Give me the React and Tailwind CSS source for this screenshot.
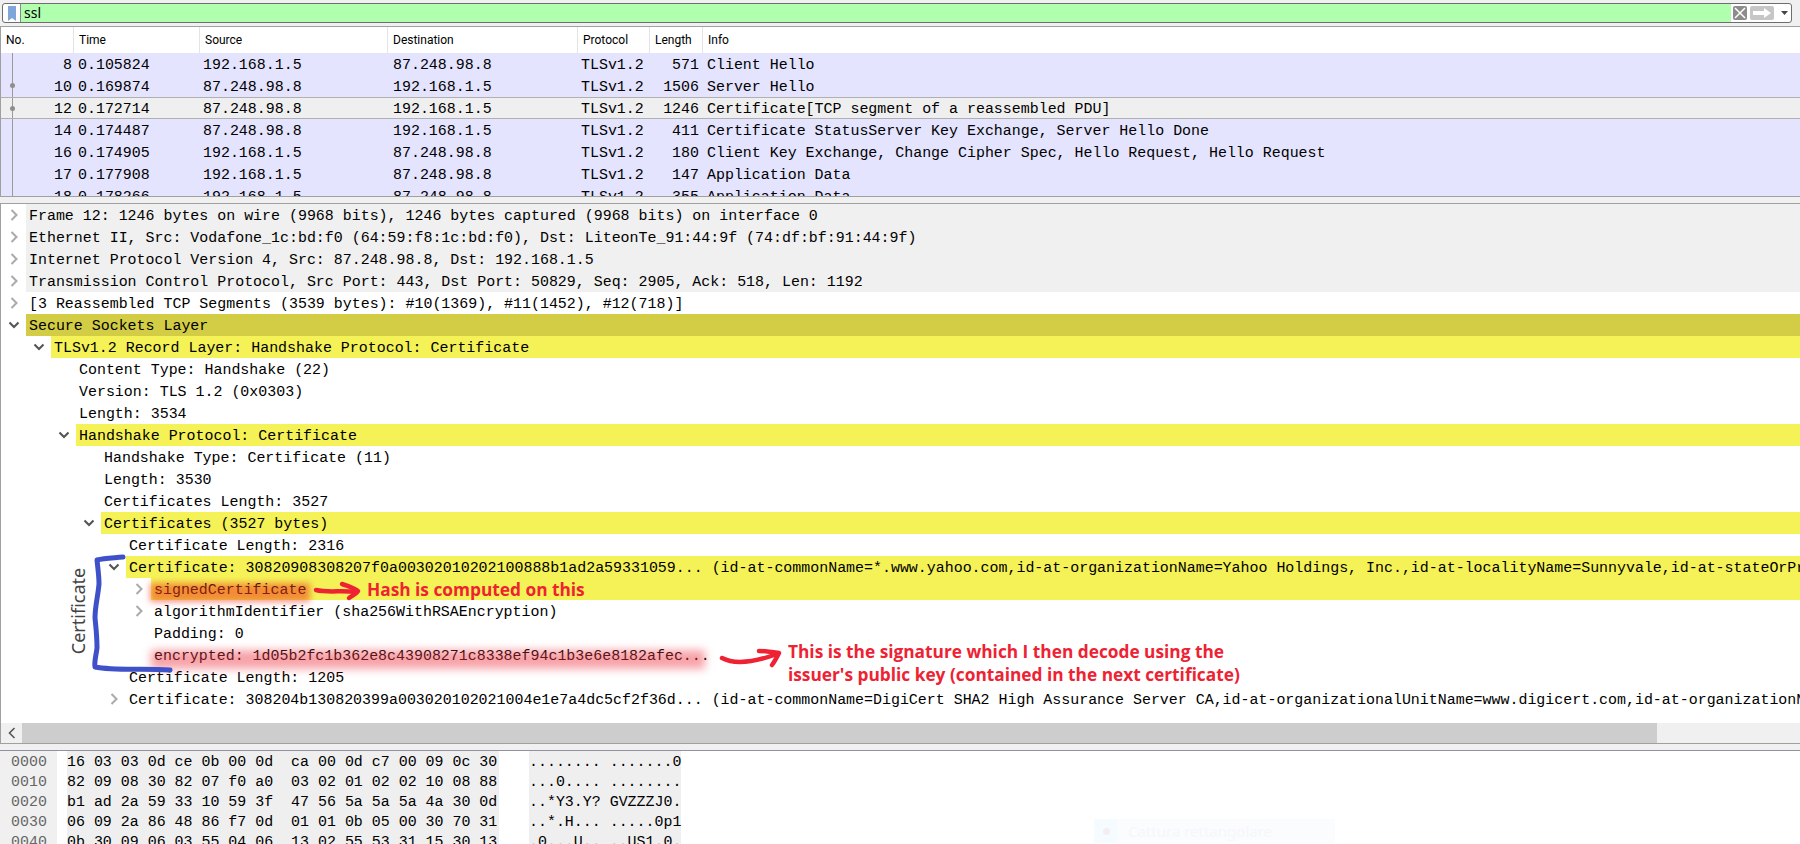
import React from "react";

const packets = [
  ["8", "0.105824", "192.168.1.5", "87.248.98.8", "TLSv1.2", "571", "Client Hello"],
  ["10", "0.169874", "87.248.98.8", "192.168.1.5", "TLSv1.2", "1506", "Server Hello"],
  ["12", "0.172714", "87.248.98.8", "192.168.1.5", "TLSv1.2", "1246", "Certificate[TCP segment of a reassembled PDU]"],
  ["14", "0.174487", "87.248.98.8", "192.168.1.5", "TLSv1.2", "411", "Certificate StatusServer Key Exchange, Server Hello Done"],
  ["16", "0.174905", "192.168.1.5", "87.248.98.8", "TLSv1.2", "180", "Client Key Exchange, Change Cipher Spec, Hello Request, Hello Request"],
  ["17", "0.177908", "192.168.1.5", "87.248.98.8", "TLSv1.2", "147", "Application Data"],
  ["18", "0.178266", "192.168.1.5", "87.248.98.8", "TLSv1.2", "355", "Application Data"],
];

const GREY = "bg-[#f0f0f0]";
const OLIVE = "bg-[#d2cd45]";
const YELLOW = "bg-[#f5f257]";

const details = [
  { x: 30, icon: "right", bg: GREY, text: "Frame 12: 1246 bytes on wire (9968 bits), 1246 bytes captured (9968 bits) on interface 0" },
  { x: 30, icon: "right", bg: GREY, text: "Ethernet II, Src: Vodafone_1c:bd:f0 (64:59:f8:1c:bd:f0), Dst: LiteonTe_91:44:9f (74:df:bf:91:44:9f)" },
  { x: 30, icon: "right", bg: GREY, text: "Internet Protocol Version 4, Src: 87.248.98.8, Dst: 192.168.1.5" },
  { x: 30, icon: "right", bg: GREY, text: "Transmission Control Protocol, Src Port: 443, Dst Port: 50829, Seq: 2905, Ack: 518, Len: 1192" },
  { x: 30, icon: "right", text: "[3 Reassembled TCP Segments (3539 bytes): #10(1369), #11(1452), #12(718)]" },
  { x: 30, icon: "down", bg: OLIVE, text: "Secure Sockets Layer" },
  { x: 55, icon: "down", bg: YELLOW, text: "TLSv1.2 Record Layer: Handshake Protocol: Certificate" },
  { x: 80, text: "Content Type: Handshake (22)" },
  { x: 80, text: "Version: TLS 1.2 (0x0303)" },
  { x: 80, text: "Length: 3534" },
  { x: 80, icon: "down", bg: YELLOW, text: "Handshake Protocol: Certificate" },
  { x: 105, text: "Handshake Type: Certificate (11)" },
  { x: 105, text: "Length: 3530" },
  { x: 105, text: "Certificates Length: 3527" },
  { x: 105, icon: "down", bg: YELLOW, text: "Certificates (3527 bytes)" },
  { x: 130, text: "Certificate Length: 2316" },
  { x: 130, icon: "down", bg: YELLOW, text: "Certificate: 30820908308207f0a00302010202100888b1ad2a59331059... (id-at-commonName=*.www.yahoo.com,id-at-organizationName=Yahoo Holdings, Inc.,id-at-localityName=Sunnyvale,id-at-stateOrProvinceName=California,id-at-countryName=US)" },
  { x: 155, icon: "right", bg: YELLOW, text: "signedCertificate" },
  { x: 155, icon: "right", text: "algorithmIdentifier (sha256WithRSAEncryption)" },
  { x: 155, text: "Padding: 0" },
  { x: 155, text: "encrypted: 1d05b2fc1b362e8c43908271c8338ef94c1b3e6e8182afec..." },
  { x: 130, text: "Certificate Length: 1205" },
  { x: 130, icon: "right", text: "Certificate: 308204b130820399a003020102021004e1e7a4dc5cf2f36d... (id-at-commonName=DigiCert SHA2 High Assurance Server CA,id-at-organizationalUnitName=www.digicert.com,id-at-organizationName=DigiCert Inc,id-at-countryName=US)" },
];

const hexRows = [
  ["0000", "16 03 03 0d ce 0b 00 0d  ca 00 0d c7 00 09 0c 30", "........ .......0"],
  ["0010", "82 09 08 30 82 07 f0 a0  03 02 01 02 02 10 08 88", "...0.... ........"],
  ["0020", "b1 ad 2a 59 33 10 59 3f  47 56 5a 5a 5a 4a 30 0d", "..*Y3.Y? GVZZZJ0."],
  ["0030", "06 09 2a 86 48 86 f7 0d  01 01 0b 05 00 30 70 31", "..*.H... .....0p1"],
  ["0040", "0b 30 09 06 03 55 04 06  13 02 55 53 31 15 30 13", ".0...U.. ..US1.0."],
];

const Chevron = ({ dir }) => (
  <svg width="12" height="12" viewBox="0 0 12 12" fill="none" strokeWidth="2.1">
    {dir === "right" ? (
      <path d="M3.5 1 L8.5 6 L3.5 11" stroke="#ababab" />
    ) : (
      <path d="M1.5 3.5 L6 8 L10.5 3.5" stroke="#555555" />
    )}
  </svg>
);

const DetailRow = ({ row }) => (
  <div className="flex h-[22px] shrink-0">
    <div
      className="flex shrink-0 items-center justify-end pr-[6px]"
      style={{ width: row.x - 5 }}
    >
      {row.icon && <Chevron dir={row.icon} />}
    </div>
    <div className={`flex-1 overflow-hidden whitespace-pre pl-[3px] leading-[24px] ${row.bg || ""}`}>
      {row.text}
    </div>
  </div>
);

const PacketRow = ({ p, i }) => {
  const selected = p[0] === "12";
  return (
    <div
      className={`relative flex h-[22px] shrink-0 ${
        selected ? "border-y border-[#b0b0b0] bg-[#efefef] leading-[22px]" : "bg-[#e4e4fe] leading-[24px]"
      }`}
    >
      <span className="absolute bottom-0 left-[11px] top-0 w-px bg-[#9a9a9a]" />
      {(i === 1 || i === 2) && (
        <span className="absolute left-[9px] top-[8px] h-[5px] w-[5px] rounded-full bg-[#8e8e8e]" />
      )}
      <div className="w-[71px] shrink-0 text-right">{p[0]}</div>
      <div className="ml-[6px] w-[125px] shrink-0">{p[1]}</div>
      <div className="w-[190px] shrink-0">{p[2]}</div>
      <div className="w-[188px] shrink-0">{p[3]}</div>
      <div className="flex w-[118px] shrink-0 justify-between">
        <span>{p[4]}</span>
        <span>{p[5]}</span>
      </div>
      <div className="ml-[8px] whitespace-pre">{p[6]}</div>
    </div>
  );
};

const headers = [
  ["No.", "w-[73px]"],
  ["Time", "w-[126px]"],
  ["Source", "w-[188px]"],
  ["Destination", "w-[190px]"],
  ["Protocol", "w-[72px]"],
  ["Length", "w-[53px]"],
  ["Info", "flex-1"],
];

const Annotations = () => (
  <>
    {/* red marker glows */}
    <div className="absolute left-[150px] top-[583px] h-[19px] w-[160px] bg-[#ee3a1c]/55 blur-[3px]" />
    <div className="absolute left-[151px] top-[650px] h-[19px] w-[554px] bg-[#ee3340]/45 blur-[4px]" />

    <svg className="absolute left-0 top-0" width="1800" height="844" fill="none" strokeLinecap="round" strokeLinejoin="round">
      {/* blue bracket */}
      <path
        d="M123 557 C112 558 104 558 97 560 C98 570 99 576 99 584 C98 596 95 606 95 618 C96 628 97 636 97 648 C96 656 94 662 95 667 C115 671 145 668 170 670"
        stroke="#3f51c9"
        strokeWidth="5"
      />
      {/* arrows */}
      <path d="M316 590 C328 593 342 590 355 592" stroke="#ee2233" strokeWidth="4.5" />
      <path d="M342 584 C348 586 354 588 358 591 C356 594 352 596 349 598" stroke="#ee2233" strokeWidth="4.5" />
      <path d="M722 658 C735 665 755 662 777 654" stroke="#ee2233" strokeWidth="4.5" />
      <path d="M759 651 C765 651 772 652 779 653 C777 657 775 661 772 665" stroke="#ee2233" strokeWidth="4.5" />
    </svg>

    <div className="absolute left-[78px] top-[611px] -translate-x-1/2 -translate-y-1/2 -rotate-90 whitespace-nowrap font-['Noto_Sans',sans-serif] text-[18px] leading-none text-[#444444]">
      Certificate
    </div>
    <div className="absolute left-[367px] top-[579px] whitespace-nowrap font-['Open_Sans',sans-serif] text-[17.3px] font-bold leading-[22px] text-[#ee2233]">
      Hash is computed on this
    </div>
    <div className="absolute left-[788px] top-[640px] whitespace-nowrap font-['Open_Sans',sans-serif] text-[17.3px] font-bold leading-[23px] text-[#ee2233]">
      <div>This is the signature which I then decode using the</div>
      <div>issuer's public key (contained in the next certificate)</div>
    </div>

    {/* faded capture toast */}
    <div className="absolute left-[1094px] top-[819px] flex h-[24px] w-[241px] items-center bg-[#fbfcfe]">
      <div className="flex h-full w-[24px] items-center justify-center bg-[#f6fbff]">
        <span className="h-[7px] w-[7px] rounded-full bg-[#f3eef0]" />
      </div>
      <span className="ml-[10px] font-['Noto_Sans',sans-serif] text-[15px] text-[#f5f7fa]">Cattura rettangolare</span>
    </div>
  </>
);

export default function App() {
  return (
    <div className="relative flex h-[844px] w-[1800px] flex-col overflow-hidden bg-[#f0f0f0] font-['Liberation_Mono',monospace] text-[14.95px] text-black">
      {/* filter bar */}
      <div className="h-[26px] shrink-0 pl-[2px] pr-[8px] pt-[3px]">
        <div className="flex h-[20px] overflow-hidden rounded-[3px] border border-[#6e6e6e] bg-white">
          <div className="flex w-[18px] items-center justify-center border-r border-[#8a8a8a]">
            <svg width="8" height="15" viewBox="0 0 8 15">
              <path d="M0 0 H8 V15 L4 12 L0 15 Z" fill="#7ea6d8" />
            </svg>
          </div>
          <div className="w-[1710px] bg-[#afffaf] pl-[3px] font-['Noto_Sans',sans-serif] text-[14px] leading-[18px] text-black">ssl</div>
          <div className="flex flex-1 items-center pl-[2px]">
            <div className="flex h-[14px] w-[14px] items-center justify-center rounded-[2px] bg-[#8c8c8c]">
              <svg width="12" height="12" viewBox="0 0 12 12">
                <path d="M1 1 L11 11 M11 1 L1 11" stroke="white" strokeWidth="1.5" />
              </svg>
            </div>
            <div className="ml-[3px] flex h-[14px] w-[24px] items-center justify-center rounded-[2px] bg-[#c6c6c6]">
              <svg width="18" height="10" viewBox="0 0 18 10">
                <path d="M0 3 H11 V0 L18 5 L11 10 V7 H0 Z" fill="white" />
              </svg>
            </div>
            <svg className="ml-[7px]" width="7" height="4" viewBox="0 0 7 4">
              <path d="M0 0 H7 L3.5 4 Z" fill="#444444" />
            </svg>
          </div>
        </div>
      </div>

      {/* packet list */}
      <div className="flex h-[171px] shrink-0 flex-col overflow-hidden border-y border-l border-[#a0a0a0] bg-white">
        <div className="flex h-[26px] shrink-0 bg-white font-['Roboto',sans-serif] text-[12px] leading-[26px] text-black">
          {headers.map(([label, w]) => (
            <div key={label} className={`${w} shrink-0 border-r border-[#e4e4e4] pl-[5px] last:border-r-0`}>
              {label}
            </div>
          ))}
        </div>
        {packets.map((p, i) => (
          <PacketRow key={p[0]} p={p} i={i} />
        ))}
      </div>

      <div className="h-[6px] shrink-0" />

      {/* packet details */}
      <div className="flex h-[541px] shrink-0 flex-col border-y border-l border-[#a0a0a0] bg-white">
        <div className="flex flex-1 flex-col overflow-hidden">
          {details.map((row, i) => (
            <DetailRow key={i} row={row} />
          ))}
        </div>
        <div className="flex h-[20px] shrink-0 bg-[#f0f0f0]">
          <div className="flex w-[21px] items-center justify-center">
            <svg width="8" height="12" viewBox="0 0 8 12" fill="none">
              <path d="M6.5 1 L1.5 6 L6.5 11" stroke="#555555" strokeWidth="1.6" />
            </svg>
          </div>
          <div className="w-[1635px] bg-[#cdcdcd]" />
        </div>
      </div>

      <div className="h-[6px] shrink-0" />

      {/* hex dump */}
      <div className="flex-1 overflow-hidden border-t border-[#8f939c] bg-white">
        {hexRows.map(([off, hex, ascii]) => (
          <div key={off} className="flex h-[20px] leading-[22px]">
            <div className="w-[57px] shrink-0 bg-[#f0f0f0] pl-[11px] text-[#666666]">{off}</div>
            <div className="ml-[10px] w-[432px] shrink-0 whitespace-pre bg-[#efefef]">{hex}</div>
            <div className="ml-[30px] w-[152px] shrink-0 whitespace-pre bg-[#efefef]">{ascii}</div>
          </div>
        ))}
      </div>

      <Annotations />
    </div>
  );
}
